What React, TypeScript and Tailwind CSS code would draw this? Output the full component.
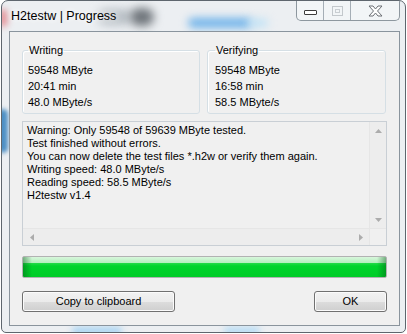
import React from "react";

const logLines = [
  "Warning: Only 59548 of 59639 MByte tested.",
  "Test finished without errors.",
  "You can now delete the test files *.h2w or verify them again.",
  "Writing speed: 48.0 MByte/s",
  "Reading speed: 58.5 MByte/s",
  "H2testw v1.4",
];

function Arrow({ dir }: { dir: "up" | "down" | "left" | "right" }) {
  const vertical = dir === "up" || dir === "down";
  const w = vertical ? 7 : 4;
  const h = vertical ? 4 : 7;
  const pts = {
    up: "0,4 3.5,0 7,4",
    down: "0,0 3.5,4 7,0",
    left: "4,0 0,3.5 4,7",
    right: "0,0 4,3.5 0,7",
  }[dir];
  return (
    <svg width={w} height={h} viewBox={`0 0 ${w} ${h}`}>
      <polygon points={pts} fill="#acacac" />
    </svg>
  );
}

function GroupBox({ title, lines, pad }: { title: string; lines: string[]; pad: string }) {
  return (
    <fieldset className={`min-w-0 border border-[#d5dfe5] rounded-[3px] shadow-[inset_1px_1px_0_#ffffff] pt-[5px] pb-[3px] ${pad}`}>
      <legend className="px-[1px] leading-[13px]">{title}</legend>
      {lines.map((l) => (
        <div key={l} className="leading-[16px]">
          {l}
        </div>
      ))}
    </fieldset>
  );
}

function Button({ label, width }: { label: string; width: string }) {
  return (
    <button
      className={`${width} h-[21px] rounded-[3px] border border-[#707070] bg-[linear-gradient(to_bottom,#f2f2f2_0%,#ebebeb_50%,#dddddd_50%,#cfcfcf_100%)] shadow-[inset_0_0_0_1px_#fbfbfb] text-[11px] leading-[13px] text-black`}
    >
      {label}
    </button>
  );
}

export default function App() {
  return (
    <div className="w-[407px] h-[334px] bg-white overflow-hidden font-['Liberation_Sans',Arial,sans-serif] text-[11px] text-black">
      {/* window frame */}
      <div className="relative ml-[1px] w-[405px] h-[333px] border border-[#5e666e] rounded-t-[7px] rounded-b-[5px] bg-[#eceff2] overflow-hidden flex flex-col">
        {/* glass blur behind */}
        <div className="absolute left-[-4px] top-[8px] w-[10px] h-[18px] rounded-full bg-[#e59aa0] blur-[3px]" />
        <div className="absolute left-[96px] top-[8px] w-[34px] h-[16px] rounded-full bg-[#b9c0c6] blur-[5px]" />
        <div className="absolute left-[128px] top-[7px] w-[24px] h-[18px] rounded-full bg-[#6f757b] blur-[5px]" />
        <div className="absolute left-[186px] top-[17px] w-[64px] h-[10px] rounded-full bg-[#6fb3ea] blur-[4px]" />
        <div className="absolute left-[246px] top-[18px] w-[20px] h-[8px] rounded-full bg-[#bfe2f6] blur-[4px]" />
        <div className="absolute left-[-4px] top-[108px] w-[10px] h-[44px] rounded-full bg-[#4d8fc4] blur-[2px]" />
        <div className="absolute left-[70px] top-[326px] w-[50px] h-[8px] rounded-full bg-[#a9d4f2] blur-[3px]" />
        <div className="absolute left-[222px] top-[326px] w-[36px] h-[8px] rounded-full bg-[#b7dcf4] blur-[3px]" />

        {/* title bar */}
        <div className="relative h-[30px] flex items-start">
          <div className="pl-[9px] pt-[6px] text-[12.5px] leading-[18px] text-black [text-shadow:0_0_6px_#ffffff,0_0_10px_#ffffff]">
            H2testw | Progress
          </div>
          <div className="ml-auto mr-[5px] flex h-[20px] border border-t-0 border-[#8d979f] rounded-b-[5px] bg-[#f3f5f7]/90 overflow-hidden">
            <div className="w-[27px] flex items-center justify-center border-r border-[#a5aeb6]">
              <div className="mt-[4px] w-[13px] h-[5px] border border-[#3c3c3c] bg-white rounded-[1px]" />
            </div>
            <div className="w-[27px] flex items-center justify-center border-r border-[#a5aeb6]">
              <div className="w-[11px] h-[10px] border border-[#c3c8cc] flex items-center justify-center">
                <div className="w-[5px] h-[4px] border border-[#c9ced2]" />
              </div>
            </div>
            <div className="w-[48px] flex items-center justify-center">
              <svg width="15" height="12" viewBox="0 0 15 12">
                <polygon
                  points="1,1 5,1 7.5,4 10,1 14,1 9.5,6 14,11 10,11 7.5,8 5,11 1,11 5.5,6"
                  fill="#ffffff"
                  stroke="#6a6f74"
                  strokeWidth="1"
                  strokeLinejoin="round"
                />
              </svg>
            </div>
          </div>
        </div>

        {/* client area */}
        <div className="relative ml-[7px] mr-[5px] mb-[6px] flex-1 border border-[#8a949d] bg-[#f0f0f0] px-[12px] pt-[12px] pb-[13px] flex flex-col">
          <div className="grid grid-cols-[178px_179px] gap-[7px] h-[70px]">
            <GroupBox title="Writing" lines={["59548 MByte", "20:41 min", "48.0 MByte/s"]} pad="px-[5px]" />
            <GroupBox title="Verifying" lines={["59548 MByte", "16:58 min", "58.5 MByte/s"]} pad="pl-[7px] pr-[5px]" />
          </div>

          {/* log box */}
          <div className="mt-[7px] h-[125px] border border-[#c9cfd5] bg-[#f0f0f0] flex flex-col">
            <div className="flex h-[106px]">
              <div className="flex-1 pl-[4px] pt-[2px]">
                {logLines.map((l) => (
                  <div key={l} className="leading-[13px] whitespace-nowrap">
                    {l}
                  </div>
                ))}
              </div>
              <div className="w-[17px] flex flex-col border-l border-[#e6e6e6] bg-[#ededed]">
                <div className="h-[17px] flex items-center justify-center">
                  <Arrow dir="up" />
                </div>
                <div className="flex-1" />
                <div className="h-[17px] flex items-center justify-center">
                  <Arrow dir="down" />
                </div>
              </div>
            </div>
            <div className="flex h-[17px] border-t border-[#e6e6e6] bg-[#ededed]">
              <div className="w-[17px] flex items-center justify-center">
                <Arrow dir="left" />
              </div>
              <div className="flex-1" />
              <div className="w-[17px] flex items-center justify-center">
                <Arrow dir="right" />
              </div>
              <div className="w-[17px] bg-[#f0f0f0] border-l border-[#e6e6e6]" />
            </div>
          </div>

          {/* progress */}
          <div className="mt-[10px] h-[22px] border border-[#b2b2b2] rounded-[2px] bg-[linear-gradient(to_right,rgba(0,90,20,0.45),rgba(0,90,20,0)_9px,rgba(0,90,20,0)_calc(100%-9px),rgba(0,90,20,0.45)),linear-gradient(to_bottom,#d8f7dc_0%,#b6efbe_28%,#20da45_32%,#00d42b_45%,#00cc28_100%)]" />

          {/* buttons */}
          <div className="mt-[13px] flex justify-between">
            <Button label="Copy to clipboard" width="w-[153px]" />
            <Button label="OK" width="w-[73px]" />
          </div>
        </div>
      </div>
    </div>
  );
}
